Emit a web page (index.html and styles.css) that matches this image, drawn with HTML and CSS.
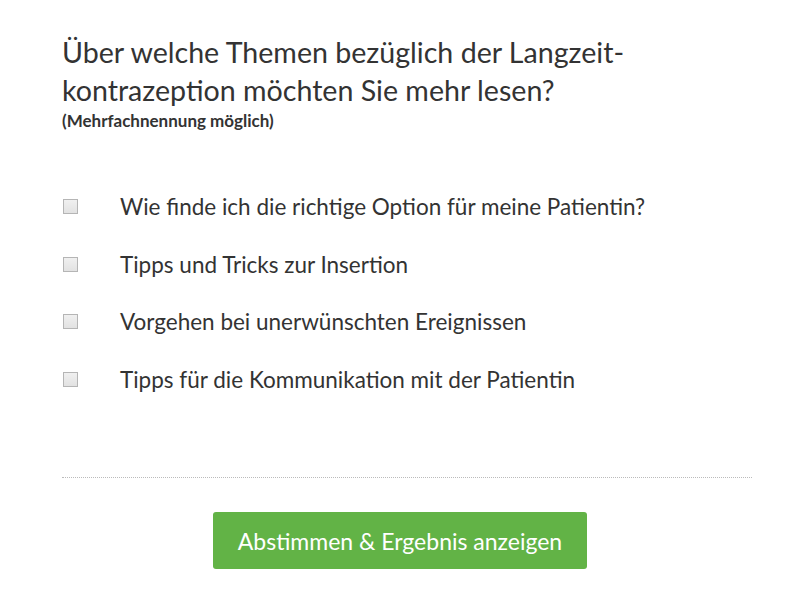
FILE: index.html
```html
<!DOCTYPE html>
<html lang="de">
<head>
  <meta charset="UTF-8">
  <meta name="viewport" content="width=device-width, initial-scale=1.0">
  <title>Umfrage</title>
  <link rel="stylesheet" href="styles.css">
</head>
<body>
  <div class="umfrage">
    <div class="inhalt">
      <h2 class="frage">Über welche Themen bezüglich der Langzeit-<br>kontrazeption möchten Sie mehr lesen?</h2>
      <p class="hinweis">(Mehrfachnennung möglich)</p>

      <div class="optionen">
        <label class="option"><input type="checkbox" name="thema" value="1"><span>Wie finde ich die richtige Option für meine Patientin?</span></label>
        <label class="option"><input type="checkbox" name="thema" value="2"><span>Tipps und Tricks zur Insertion</span></label>
        <label class="option"><input type="checkbox" name="thema" value="3"><span>Vorgehen bei unerwünschten Ereignissen</span></label>
        <label class="option"><input type="checkbox" name="thema" value="4"><span>Tipps für die Kommunikation mit der Patientin</span></label>
      </div>

      <div class="trenner"></div>
    </div>

    <div class="aktion">
      <button class="botao-abstimmen">Abstimmen &amp; Ergebnis anzeigen</button>
    </div>
  </div>
</body>
</html>
```

FILE: styles.css
```css
body {
  margin: 0;
  font-family: Lato, "Liberation Sans", sans-serif;
  background: white;
  color: #333;
}

.umfrage {
  padding-top: 33px;
}

.inhalt {
  margin: 0 48px 0 62px;
}

.frage {
  margin: 0;
  font-size: 28.6px;
  font-weight: normal;
  line-height: 38px;
}

.hinweis {
  margin: 2px 0 0;
  font-size: 17px;
  font-weight: bold;
  line-height: 20px;
}

.optionen {
  margin-top: 47px;
}

.option {
  display: flex;
  align-items: center;
  height: 57.5px;
  font-size: 22.5px;
  cursor: pointer;
}

.option input {
  appearance: none;
  width: 15px;
  height: 15px;
  margin: 0 42px 0 1px;
  border: 1px solid #b5b5b5;
  background: linear-gradient(#f0f0f0, #e2e2e2);
  box-sizing: border-box;
}

.trenner {
  margin-top: 69px;
  border-top: 1px dotted #bbb;
}

.aktion {
  text-align: center;
  padding-top: 34px;
}

.botao-abstimmen {
  width: 374px;
  height: 57px;
  background-color: #62b346;
  color: white;
  border: none;
  border-radius: 3px;
  font-family: inherit;
  font-size: 23px;
  cursor: pointer;
}
```
